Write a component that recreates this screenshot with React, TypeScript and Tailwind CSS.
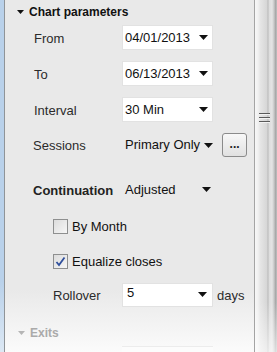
import React from 'react';

const font = { fontFamily: '"Liberation Sans", Arial, sans-serif' };

const Caret = ({ color = '#111' }: { color?: string }) => (
  <svg width="9" height="5" viewBox="0 0 9 5" className="shrink-0">
    <polygon points="0,0 9,0 4.5,5" fill={color} />
  </svg>
);

const Dropdown = ({ value, h = 'h-[25px]' }: { value: string; h?: string }) => (
  <div className={`w-[91px] ${h} bg-white border border-[#e2e2e2] flex items-center justify-between pl-[2px] pr-[4px] text-[13px] text-[#111]`}>
    <span>{value}</span>
    <Caret />
  </div>
);

const Checkbox = ({ checked }: { checked?: boolean }) => (
  <div className="w-[15px] h-[15px] border border-[#8e8f8f] bg-[linear-gradient(135deg,#dcdcdc,#f6f6f6)] flex items-center justify-center shrink-0">
    {checked && (
      <svg width="11" height="11" viewBox="0 0 11 11">
        <path d="M1.5 6 L4 9 L9.5 1.5" stroke="#2f4f9c" strokeWidth="1.8" fill="none" />
      </svg>
    )}
  </div>
);

const App = () => {
  return (
    <div className="w-[277px] h-[352px] overflow-hidden flex bg-white" style={font}>
      {/* window edge */}
      <div className="w-[4px] h-full bg-[linear-gradient(to_bottom,#b9d1ea_80%,#dce8f4)]" />
      <div className="w-[1px] h-full bg-[#8f9498]" />

      {/* panel */}
      <div className="flex-1 h-full bg-[linear-gradient(to_bottom,#e9e9e9_0px,#e9e9e9_290px,#fbfbfb_352px)] flex flex-col">
        {/* header */}
        <div className="mt-[3px] h-[18px] flex items-center pl-[12px]">
          <svg width="7" height="4" viewBox="0 0 7 4">
            <polygon points="0,0 7,0 3.5,4" fill="#111" />
          </svg>
          <span className="ml-[5px] text-[12px] font-bold text-[#111]">Chart parameters</span>
        </div>

        {/* From */}
        <div className="mt-[4px] flex items-center h-[25px]">
          <span className="w-[117px] pl-[29px] pt-[3px] text-[13px] text-[#2b2b2b]">From</span>
          <Dropdown value="04/01/2013" />
        </div>

        {/* To */}
        <div className="mt-[11px] flex items-center h-[25px]">
          <span className="w-[117px] pl-[29px] pt-[3px] text-[13px] text-[#2b2b2b]">To</span>
          <Dropdown value="06/13/2013" />
        </div>

        {/* Interval */}
        <div className="mt-[11px] flex items-center h-[25px]">
          <span className="w-[117px] pl-[29px] pt-[3px] text-[13px] text-[#2b2b2b]">Interval</span>
          <Dropdown value="30 Min" />
        </div>

        {/* Sessions */}
        <div className="mt-[11px] flex items-center h-[24px]">
          <span className="w-[120px] pl-[28px] pt-[2px] text-[13px] text-[#2b2b2b]">Sessions</span>
          <span className="text-[13px] text-[#111]">Primary Only</span>
          <span className="ml-[4px]"><Caret /></span>
          <div className="ml-[9px] w-[25px] h-[24px] rounded-[3px] border border-[#8b8b8b] bg-[linear-gradient(to_bottom,#f8f8f8,#e1e1e1)] flex items-center justify-center text-[12px] leading-none font-bold text-[#222] pb-[2px]">
            ...
          </div>
        </div>

        {/* Continuation */}
        <div className="mt-[22px] flex items-center h-[24px]">
          <span className="w-[120px] pl-[28px] pt-[2px] text-[13px] font-bold text-[#222]">Continuation</span>
          <span className="w-[77px] text-[13px] text-[#111]">Adjusted</span>
          <Caret />
        </div>

        {/* By Month */}
        <div className="mt-[17px] flex items-center h-[18px] pl-[48px]">
          <Checkbox />
          <span className="ml-[4px] text-[13px] text-[#111]">By Month</span>
        </div>

        {/* Equalize closes */}
        <div className="mt-[17px] flex items-center h-[18px] pl-[48px]">
          <Checkbox checked />
          <span className="ml-[4px] text-[13px] text-[#111]">Equalize closes</span>
        </div>

        {/* Rollover */}
        <div className="mt-[12px] flex items-center h-[24px]">
          <span className="w-[117px] pl-[48px] pt-[3px] text-[13px] text-[#2b2b2b]">Rollover</span>
          <div className="w-[91px] h-[24px] bg-white border border-[#e2e2e2] flex items-center justify-between pl-[4px] pr-[5px] text-[13px] text-[#111]">
            <span className="pb-[3px]">5</span>
            <Caret />
          </div>
          <span className="ml-[4px] pt-[3px] text-[13px] text-[#2b2b2b]">days</span>
        </div>

        {/* Exits */}
        <div className="mt-[17px] h-[18px] flex items-center pl-[13px]">
          <svg width="7" height="4" viewBox="0 0 7 4">
            <polygon points="0,0 7,0 3.5,4" fill="#b5b5b5" />
          </svg>
          <span className="ml-[5px] text-[12px] font-bold text-[#aaaaaa]">Exits</span>
        </div>

        {/* faded next field */}
        <div className="mt-[4px] ml-[117px] w-[91px] h-[20px] border-t border-[#ececec] bg-[#fcfcfc]" />
      </div>

      {/* scrollbar */}
      <div className="w-[1px] h-full bg-[#a4a4a4]" />
      <div className="relative w-[22px] h-full bg-[linear-gradient(to_right,#f7f7f7_0px,#f1f1f1_3px,#e6e6e6_5px,#d6d6d6_12px,#b9b9b9_13px,#dcdcdc_14px,#e4e4e4_17px,#c8c8c8_19px,#9f9f9f_21px,#d0d0d0_22px)]">
        <div className="absolute left-[4px] top-[113px] flex flex-col gap-[2px]">
          {[0, 1, 2].map((i) => (
            <div key={i} className="w-[11px] h-[2px] bg-[linear-gradient(to_bottom,#5a5a5a_50%,#f2f2f2_50%)]" />
          ))}
        </div>
        <div className="absolute inset-x-0 bottom-0 h-[50px] bg-[linear-gradient(to_bottom,rgba(255,255,255,0),rgba(255,255,255,0.6))]" />
      </div>
    </div>
  );
};

export default App;
